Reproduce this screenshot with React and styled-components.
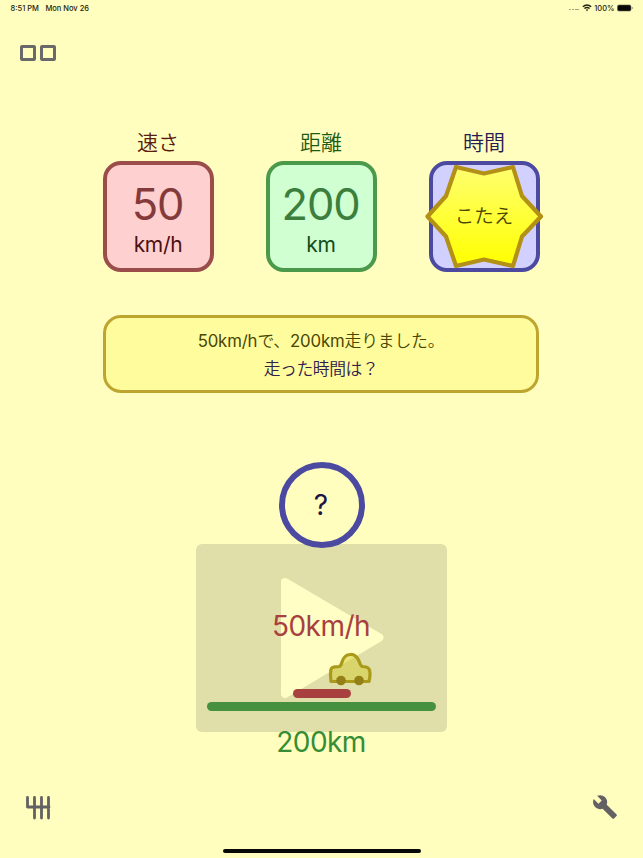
import React from "react";
import styled, { createGlobalStyle } from "styled-components";

const GlobalStyle = createGlobalStyle`
  *, *::before, *::after { box-sizing: border-box; }
  body {
    margin: 0;
    background: #fffebf;
    font-family: Inter, "Noto Sans CJK JP", sans-serif;
  }
`;

const Screen = styled.main`
  display: flex;
  flex-direction: column;
  align-items: center;
  width: 643px;
  height: 858px;
  overflow: hidden;
  background: #fffebf;
`;

const StatusBar = styled.header`
  display: flex;
  justify-content: space-between;
  align-items: center;
  width: 100%;
  height: 16px;
  padding: 0 10px 0 10.5px;
  font-size: 7.5px;
  font-weight: 500;
  line-height: 17px;
  color: #24230f;
`;

const StatusGroup = styled.div`
  display: flex;
  align-items: center;
  gap: ${(p) => p.$gap}px;
  white-space: nowrap;
`;

const Signal = styled.span`
  width: 10px;
  height: 1px;
  margin-top: 3px;
  background: repeating-linear-gradient(90deg, #a5a47e 0 2px, transparent 2px 2.8px);
`;

const Toolbar = styled.nav`
  display: flex;
  width: 100%;
  height: 45px;
  padding: 29px 0 0 20px;
  gap: 4px;
`;

const Tile = styled.span`
  width: 16px;
  height: 16px;
  border: 3px solid #6a696a;
  border-radius: 2px;
`;

const Quantities = styled.section`
  display: flex;
  gap: 52px;
  width: 437px;
  margin-top: 67px;
`;

const Quantity = styled.div`
  display: flex;
  flex-direction: column;
  align-items: center;
  width: 111px;
`;

const Label = styled.div`
  height: 33px;
  margin-right: 1px;
  font-size: 21px;
  font-weight: 350;
  line-height: 30px;
  color: ${(p) => p.$color};
`;

const Card = styled.div`
  display: flex;
  flex-direction: column;
  align-items: center;
  width: 111px;
  height: 111px;
  padding-top: 16px;
  border: 4.5px solid ${(p) => p.$border};
  border-radius: 18px;
  background: ${(p) => p.$fill};
`;

const Amount = styled.div`
  font-size: 43.5px;
  font-weight: 400;
  line-height: 47px;
  letter-spacing: -1.2px;
  margin-right: 2px;
  color: ${(p) => p.$color};
`;

const Unit = styled.div`
  font-size: 21px;
  font-weight: 400;
  line-height: 30px;
  margin-top: 2px;
  margin-right: 1px;
  letter-spacing: -0.3px;
  color: ${(p) => p.$color};
`;

const AnswerCard = styled(Card)`
  display: grid;
  grid-template: 102px / 102px;
  place-items: center;
  padding: 0;
`;

const Star = styled.svg`
  grid-area: 1 / 1;
  width: 120px;
  height: 111px;
  margin: -4.5px -9px;
`;

const Answer = styled.span`
  grid-area: 1 / 1;
  z-index: 1;
  font-size: 19.5px;
  font-weight: 350;
  line-height: 28px;
  color: #4a4500;
`;

const Message = styled.section`
  display: flex;
  flex-direction: column;
  align-items: center;
  width: 436px;
  height: 78px;
  margin-top: 43px;
  margin-right: 1px;
  padding-top: 9px;
  border: 3px solid #bea530;
  border-radius: 18px;
  background: #fffc9d;
`;

const Line = styled.p`
  margin: 0;
  font-size: 16.8px;
  font-weight: ${(p) => p.$weight || 400};
  line-height: 28px;
  letter-spacing: ${(p) => p.$spacing}px;
  white-space: nowrap;
  color: ${(p) => p.$color};
`;

const Kana = styled.span`
  font-weight: 350;
`;

const Unknown = styled.div`
  display: flex;
  justify-content: center;
  z-index: 1;
  width: 86px;
  height: 86px;
  margin: 69px 0 0 0;
  border: 6px solid #4c4aa0;
  border-radius: 50%;
  font-size: 28px;
  font-weight: 400;
  line-height: 75px;
  letter-spacing: 1px;
  color: #211348;
`;

const Player = styled.section`
  display: grid;
  width: 251px;
  height: 188px;
  margin-top: -4.5px;
  border-radius: 6px;
  background: #e0dfa9;
`;

const PlayShape = styled.svg`
  grid-area: 1 / 1;
  width: 251px;
  height: 188px;
`;

const Track = styled.div`
  grid-area: 1 / 1;
  z-index: 1;
  display: flex;
  flex-direction: column;
`;

const Speed = styled.div`
  height: 38px;
  margin-top: 63px;
  padding-right: 1px;
  font-size: 28px;
  font-weight: 400;
  letter-spacing: -0.55px;
  line-height: 38px;
  text-align: center;
  color: #a8403f;
`;

const Car = styled.svg`
  width: 44px;
  height: 36px;
  margin: 6px 0 0 132px;
`;

const Bar = styled.div`
  flex: none;
  width: ${(p) => p.$width}px;
  height: 9px;
  margin: ${(p) => p.$top}px 0 0 ${(p) => p.$left}px;
  border-radius: 5px;
  background: ${(p) => p.$color};
`;

const Distance = styled.div`
  height: 20px;
  margin-right: 1px;
  font-size: 28px;
  font-weight: 400;
  letter-spacing: -0.6px;
  line-height: 20px;
  color: #358d36;
`;

const Footer = styled.footer`
  display: flex;
  justify-content: space-between;
  align-items: center;
  width: 100%;
  height: 30px;
  margin-top: 40px;
  padding: 0 25px 0 24px;
`;

const HomeIndicator = styled.div`
  width: 198px;
  height: 4px;
  margin-top: 27px;
  border-radius: 2px;
  background: #080808;
`;

export default function App() {
  return (
    <>
      <GlobalStyle />
      <Screen>
        <StatusBar>
          <StatusGroup $gap={6.5}>
            <span>8:51 PM</span>
            <span>Mon Nov 26</span>
          </StatusGroup>
          <StatusGroup $gap={2.5}>
            <Signal />
            <svg width="10" height="8" viewBox="0 0 10 8" fill="none" stroke="#24230f" strokeWidth="1.4">
              <path d="M.8 2.8Q5-.8 9.2 2.8M2.4 4.6Q5 2.3 7.6 4.6" />
              <path d="M3.8 5.8Q5 4.8 6.2 5.8L5 7.2Z" fill="#24230f" stroke="none" />
            </svg>
            <span>100%</span>
            <svg width="16" height="8" viewBox="0 0 16 8">
              <rect x=".4" y=".9" width="13.6" height="6.2" rx="1.6" fill="#080808" stroke="#77765a" strokeWidth=".6" />
              <path d="M14.8 3v2q1-.2 1-1t-1-1" fill="#77765a" />
            </svg>
          </StatusGroup>
        </StatusBar>

        <Toolbar>
          <Tile />
          <Tile />
        </Toolbar>

        <Quantities>
          <Quantity>
            <Label $color="#5c1b10">速さ</Label>
            <Card $border="#9b4d4b" $fill="#ffd0d0">
              <Amount $color="#843a3b">50</Amount>
              <Unit $color="#4b1114">km/h</Unit>
            </Card>
          </Quantity>
          <Quantity>
            <Label $color="#1d5a13">距離</Label>
            <Card $border="#4b994b" $fill="#d0ffd2">
              <Amount $color="#3b7e3d">200</Amount>
              <Unit $color="#144d18">km</Unit>
            </Card>
          </Quantity>
          <Quantity>
            <Label $color="#261c51">時間</Label>
            <AnswerCard $border="#4c4aa0" $fill="#d1d0ff">
              <Star viewBox="0 0 120 111">
                <defs>
                  <linearGradient id="gold" x1="0" y1="0" x2="0" y2="1">
                    <stop offset="0" stopColor="#ffff70" />
                    <stop offset="1" stopColor="#ffff00" />
                  </linearGradient>
                </defs>
                <path
                  d="M32 6L60 12.500L89 6L98 35L117 55.500L98 75.500L89 105L60 98.500L32 105L22 75.500L3.500 55.500L22 35Z"
                  fill="url(#gold)"
                  stroke="#b39116"
                  strokeWidth="4.2"
                  strokeLinejoin="round"
                />
              </Star>
              <Answer>こたえ</Answer>
            </AnswerCard>
          </Quantity>
        </Quantities>

        <Message>
          <Line $color="#494600" $spacing={-0.15}>
            50km/h<Kana>で、</Kana>200km<Kana>走りました。</Kana>
          </Line>
          <Line $color="#30204c" $spacing={-0.4} $weight={350}>走った時間は？</Line>
        </Message>

        <Unknown>?</Unknown>
        <Player>
          <PlayShape viewBox="0 0 251 188">
            <path d="M89 38L183.500 93.500L89 150Z" fill="#fffec5" stroke="#fffec5" strokeWidth="8" strokeLinejoin="round" />
          </PlayShape>
          <Track>
            <Speed>50km/h</Speed>
            <Car viewBox="0 0 44 36" stroke="#a99a1a" strokeWidth="3.2" strokeLinejoin="round">
              <path
                d="M3 30.500Q2 24 2.800 19Q3.500 16 7 15.800L11 15.500Q13 15 14 11Q16.500 3.500 22 3.500Q28 3 31 10Q32.500 15 34.500 15.500L38 16Q42 17 42 22Q42 27 41 30.500Z"
                fill="#d2cc30"
                fillOpacity="0.5"
              />
              <circle cx="13" cy="29.5" r="4.8" fill="#958018" stroke="none" />
              <circle cx="31" cy="29.5" r="4.8" fill="#958018" stroke="none" />
            </Car>
            <Bar $width={57.5} $left={97} $top={2.5} $color="#a8403f" />
            <Bar $width={229} $left={11} $top={3.5} $color="#45913f" />
          </Track>
        </Player>
        <Distance>200km</Distance>

        <Footer>
          <svg width="28" height="28" viewBox="0 0 28 28" fill="none" stroke="#636163" strokeWidth="2.8" strokeLinecap="round" strokeLinejoin="round">
            <path d="M3.500 4.500V14H25M10.500 4.500V25M17.500 4.500V25M24.500 4.500V25" />
          </svg>
          <svg width="26" height="26" viewBox="0 0 24 24" fill="#636163">
            <path d="M22.700 19l-9.100-9.100c.9-2.300.4-5-1.500-6.900-2-2-5-2.400-7.400-1.300L9 6 6 9 1.600 4.700C.4 7.100.9 10.100 2.900 12.100c1.900 1.900 4.600 2.400 6.900 1.500l9.100 9.100c.4.4 1 .4 1.400 0l2.300-2.300c.5-.4.5-1.100.1-1.400z" />
          </svg>
        </Footer>
        <HomeIndicator />
      </Screen>
    </>
  );
}
